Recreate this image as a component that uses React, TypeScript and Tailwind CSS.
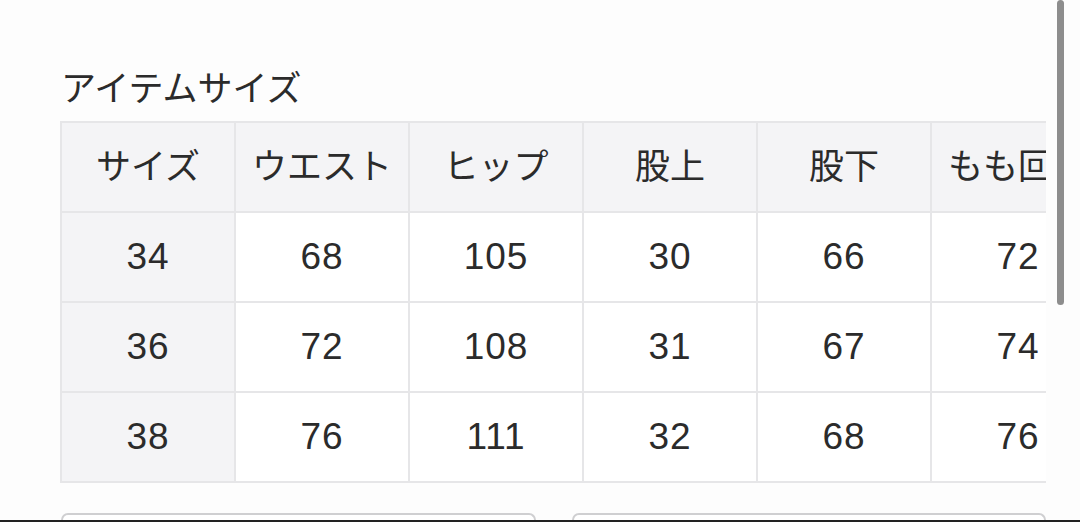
const headers = ["サイズ", "ウエスト", "ヒップ", "股上", "股下", "もも回り"];

const rows = [
  ["34", "68", "105", "30", "66", "72"],
  ["36", "72", "108", "31", "67", "74"],
  ["38", "76", "111", "32", "68", "76"],
];

export default function App() {
  return (
    <div
      className="relative w-[1080px] h-[522px] overflow-hidden bg-[#fdfdfd] text-[#2b2b2b] flex flex-col"
      style={{ fontFamily: '"Liberation Sans", "Noto Sans CJK JP", sans-serif' }}
    >
      <div className="pl-[61px] pt-[71px] pb-[14px]">
        <h2 className="text-[35px] leading-[36px] font-normal">アイテムサイズ</h2>
      </div>

      {/* size table, scrolls sideways */}
      <div className="ml-[60px] w-[986px] overflow-hidden">
        <div className="grid grid-cols-[repeat(6,172px)] auto-rows-[88px] gap-[2px] p-[2px] bg-[#e6e6e8] w-max">
          {headers.map((h) => (
            <div key={h} className="bg-[#f4f4f6] flex items-center justify-center text-[35px] whitespace-nowrap">
              {h}
            </div>
          ))}
          {rows.map((r) =>
            r.map((v, i) => (
              <div
                key={r[0] + "-" + i}
                className={`${i === 0 ? "bg-[#f4f4f6]" : "bg-white"} flex items-center justify-center text-[37px] tracking-[1px]`}
              >
                {v}
              </div>
            ))
          )}
        </div>
      </div>

      <div className="flex-1" />

      {/* next section peeking in */}
      <div className="flex gap-[36px] pl-[61px] pr-[34px]">
        <div className="flex-1 h-[7px] border-2 border-b-0 border-[#cfcfd1] rounded-t-[7px] bg-white" />
        <div className="flex-1 h-[7px] border-2 border-b-0 border-[#cfcfd1] rounded-t-[7px] bg-white" />
      </div>
      <div className="h-[2px] bg-[#222]" />

      {/* overlay scrollbar */}
      <div className="absolute right-[16px] top-0 w-[7px] h-[305px] rounded-full bg-[#8d8d8d]" />
    </div>
  );
}
